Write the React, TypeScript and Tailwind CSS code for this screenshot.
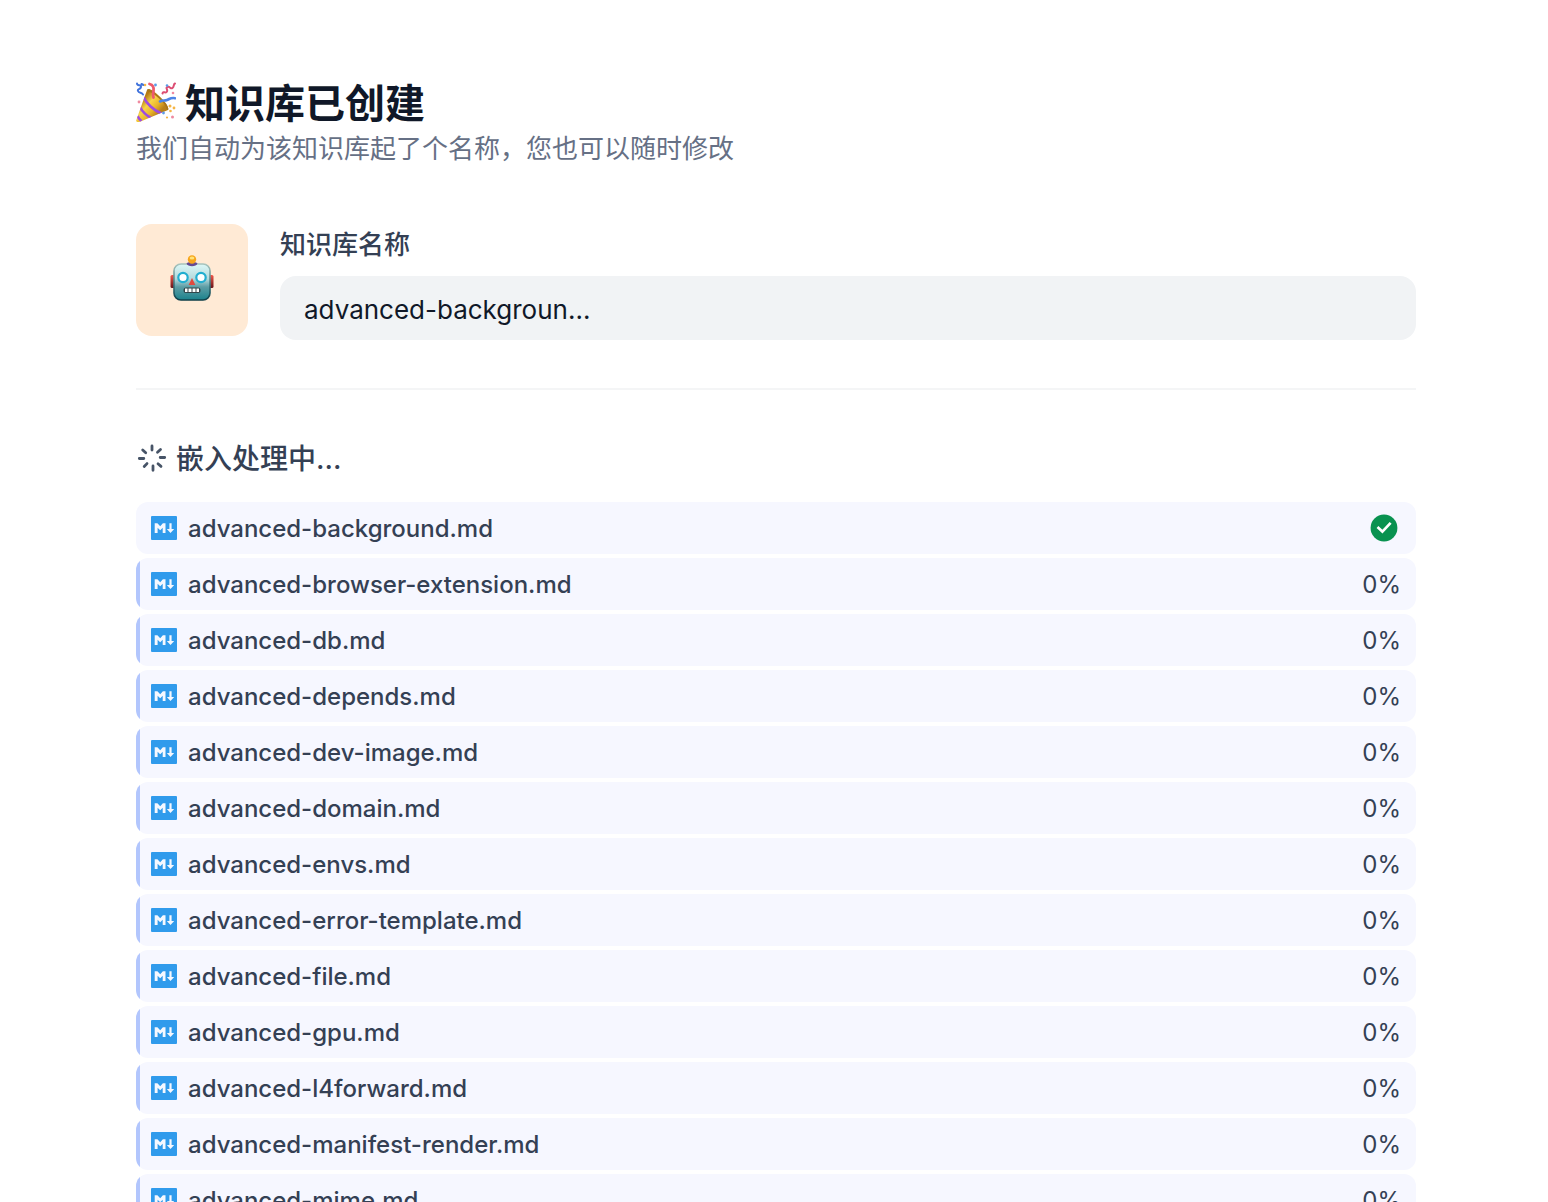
import { useState } from 'react';
import clsx from 'clsx';

type EmbeddingFile = {
  name: string;
  percent: number;
};

const files: EmbeddingFile[] = [
  { name: 'advanced-background.md', percent: 100 },
  { name: 'advanced-browser-extension.md', percent: 0 },
  { name: 'advanced-db.md', percent: 0 },
  { name: 'advanced-depends.md', percent: 0 },
  { name: 'advanced-dev-image.md', percent: 0 },
  { name: 'advanced-domain.md', percent: 0 },
  { name: 'advanced-envs.md', percent: 0 },
  { name: 'advanced-error-template.md', percent: 0 },
  { name: 'advanced-file.md', percent: 0 },
  { name: 'advanced-gpu.md', percent: 0 },
  { name: 'advanced-l4forward.md', percent: 0 },
  { name: 'advanced-manifest-render.md', percent: 0 },
  { name: 'advanced-mime.md', percent: 0 },
];

function PartyIcon() {
  return (
    <svg className="mt-0.5 size-10 shrink-0" viewBox="0 0 40 40" fill="none" aria-hidden="true">
      <defs>
        <linearGradient id="cone" x1="6" y1="18" x2="22" y2="32" gradientUnits="userSpaceOnUse">
          <stop stopColor="#b57a16" />
          <stop offset="0.35" stopColor="#f8d548" />
          <stop offset="0.7" stopColor="#e9b32a" />
          <stop offset="1" stopColor="#b98018" />
        </linearGradient>
        <clipPath id="cone-clip">
          <path d="M0.300 38 11 8c1-2.500 6 0 12 6s10.500 11.500 9 14L4 39.800c-2 .8-4.500.2-3.700-1.800Z" />
        </clipPath>
      </defs>
      <g clipPath="url(#cone-clip)">
        <path d="M0 0h40v40H0z" fill="url(#cone)" />
        <path d="M7.500 15c3 6.500 10 13.500 18 16.500M4 25c2 4 6 8.500 12 11.500M1.500 34c1 2 2 3.500 4 5" stroke="#9d4ce0" strokeWidth="2.600" />
      </g>
      <path d="M12 8.500c5 0 19 13 19.500 18.500" stroke="#a97619" strokeWidth="1.800" strokeLinecap="round" />
      <path d="M13.500 2c4 1 4.500 4 4 7s-1 4 0 6.500" stroke="#ee5a6c" strokeWidth="2.800" strokeLinecap="round" />
      <path d="M24 19.500c3-1.500 4.500-.5 7-1.500s4-2.500 8-1.800" stroke="#4c83e6" strokeWidth="2.600" strokeLinecap="round" />
      <path d="M1 1.500c0 3 4.500.5 4 3.500s-4 1.500-3 4 4 1 5 3.500M5.500 2l2 1" stroke="#3f72dc" strokeWidth="2" strokeLinecap="round" />
      <path d="M26.500 11.500c.5-3 3.500.5 4.500-2s-2-3.500.5-4.500 3 2.500 5 1 .5-3.500 2.500-4.500" stroke="#dc4f74" strokeWidth="2" strokeLinecap="round" />
      <g fill="#f5b544">
        <circle cx="9" cy="3" r="1.300" />
        <circle cx="34" cy="24" r="1.500" />
        <circle cx="34.500" cy="29" r="1.300" />
        <circle cx="38" cy="26" r="1.400" />
        <circle cx="31" cy="35.500" r="1.100" />
      </g>
      <g fill="#5c9be8">
        <circle cx="19.500" cy="3" r="1.400" />
        <circle cx="31" cy="3.500" r="1.300" />
        <circle cx="27.500" cy="31" r="1.400" />
      </g>
      <g fill="#ef8aa0">
        <circle cx="3" cy="20" r="1.400" />
        <circle cx="37" cy="11" r="1.300" />
        <circle cx="36.500" cy="35" r="1.500" />
      </g>
    </svg>
  );
}

function RobotIcon() {
  return (
    <svg className="h-[46px] w-11" viewBox="0 0 44 46" fill="none" aria-hidden="true">
      <defs>
        <linearGradient id="face" x1="0" y1="9" x2="0" y2="46" gradientUnits="userSpaceOnUse">
          <stop stopColor="#dcf8f7" />
          <stop offset="0.4" stopColor="#b4d9dc" />
          <stop offset="0.62" stopColor="#5c9da5" />
          <stop offset="1" stopColor="#16808a" />
        </linearGradient>
        <linearGradient id="rim" x1="0" y1="9" x2="0" y2="46" gradientUnits="userSpaceOnUse">
          <stop stopColor="#a9c4bd" />
          <stop offset="0.6" stopColor="#34727b" />
          <stop offset="1" stopColor="#0d3c46" />
        </linearGradient>
        <linearGradient id="ear" x1="0" y1="20" x2="0" y2="33" gradientUnits="userSpaceOnUse">
          <stop stopColor="#f0574a" />
          <stop offset="1" stopColor="#67151a" />
        </linearGradient>
      </defs>
      <rect x="0.500" y="20" width="5" height="13" rx="1.500" fill="url(#ear)" />
      <rect x="38.500" y="20" width="5" height="13" rx="1.500" fill="url(#ear)" />
      <rect x="4" y="9" width="36" height="36" rx="7" fill="url(#face)" stroke="url(#rim)" strokeWidth="1.600" />
      <path d="M16.500 8.500c2-2.500 9-2.500 11 0-1 3.500-10 3.500-11 0Z" fill="#664a91" />
      <circle cx="22" cy="4.500" r="4.200" fill="#f7a51b" />
      <ellipse cx="22" cy="3" rx="2.400" ry="1.500" fill="#ffe27a" />
      <circle cx="13" cy="22.500" r="4.700" fill="#fff" stroke="#22aed0" strokeWidth="2.200" />
      <circle cx="31" cy="22.500" r="4.700" fill="#fff" stroke="#22aed0" strokeWidth="2.200" />
      <path d="m22 23 3.400 7h-6.800L22 23Z" fill="#e0493f" />
      <rect x="13.500" y="32.500" width="17" height="5.500" rx="2.500" fill="#31464b" />
      <path d="M15 33.500h2.500v3.500H15zM18.500 33.500h3v3.500h-3zM22.500 33.500h3v3.500h-3zM26.500 33.500H29v3.500h-2.500z" fill="#fff" />
    </svg>
  );
}

function LoadingIcon() {
  return (
    <svg className="mt-1 size-8 shrink-0" viewBox="0 0 32 32" fill="none" stroke="#475467" strokeWidth="2.800" strokeLinecap="round" aria-hidden="true">
      <path d="M16 4v4M24.500 7.500l-3 2.800M28.700 15.500h-4.500M25 24.400l-3-2.600M17 28.300v-4.300M8.200 24.500l2.800-2.900M3.300 16.500h4.500M6.700 8l3 2.800" />
    </svg>
  );
}

function MarkdownIcon() {
  return (
    <svg className="h-6 w-[26px] shrink-0" viewBox="0 0 26 24" fill="none" aria-hidden="true">
      <rect width="26" height="24" rx="1" fill="#309bec" />
      <path d="M3.700 17V7.300h2.700l2.800 3 2.700-3h2.600V17h-2.800v-5.300l-2.500 2.500-2.600-2.500V17H3.700ZM18.400 7.300h2.200V13h2.600l-3.700 4-3.700-4h2.600V7.300Z" fill="#f5f8ff" />
    </svg>
  );
}

function DoneIcon() {
  return (
    <svg className="size-8 shrink-0" viewBox="0 0 32 32" fill="none" role="img" aria-label="已完成">
      <circle cx="16" cy="16" r="13.400" fill="#099250" />
      <path d="m10.500 16 3.900 3.600 7.300-7.700" stroke="#fff" strokeWidth="2.700" strokeLinecap="square" />
    </svg>
  );
}

function FileRow({ file }: { file: EmbeddingFile }) {
  const done = file.percent === 100;

  return (
    <li
      className={clsx(
        'flex h-[52px] shrink-0 items-center overflow-hidden rounded-xl bg-[#f6f7ff]',
        done ? 'pl-[15px] pr-4' : 'pr-[15px]',
      )}
    >
      {!done && <span className="mr-[11px] h-full w-1 shrink-0 bg-[#b2c6fd]" />}
      <MarkdownIcon />
      <span className="ml-[11px] grow truncate pt-0.5 text-2xl font-medium">{file.name}</span>
      {done ? <DoneIcon /> : <span className="pt-0.5 text-2xl">{file.percent}%</span>}
    </li>
  );
}

export default function App() {
  const [name, setName] = useState('advanced-backgroun...');

  return (
    <main className="h-screen overflow-hidden bg-white pt-20 pr-[132px] pl-[136px] font-['Inter','Noto_Sans_CJK_SC',sans-serif] text-[#344054]">
      {/* Title */}
      <h1 className="flex items-start gap-[9px] text-[40px] leading-[48px] font-semibold text-[#101828]">
        <PartyIcon />
        知识库已创建
      </h1>
      <p className="text-[26px] leading-[42px] text-[#667085]">我们自动为该知识库起了个名称，您也可以随时修改</p>

      {/* Name */}
      <div className="mt-[54px] flex gap-8 border-b-2 border-[#f4f5f6] pb-12">
        <button type="button" aria-label="图标" className="flex size-28 shrink-0 items-center justify-center rounded-2xl bg-[#ffead5] pb-1">
          <RobotIcon />
        </button>
        <div className="flex min-w-0 grow flex-col gap-2.5">
          <label htmlFor="dataset-name" className="text-[26px] leading-[42px] font-medium">
            知识库名称
          </label>
          <input
            id="dataset-name"
            value={name}
            onChange={(e) => setName(e.target.value)}
            className="h-16 w-full rounded-2xl bg-[#f1f3f5] px-6 pt-0.5 text-[26px] text-[#101828] outline-none"
          />
        </div>
      </div>

      {/* Progress */}
      <h2 className="mt-12 flex items-start gap-2 text-[28px] leading-[42px] font-medium">
        <LoadingIcon />
        嵌入处理中...
      </h2>
      <ul className="mt-[22px] flex flex-col gap-1">
        {files.map((file) => (
          <FileRow key={file.name} file={file} />
        ))}
      </ul>
    </main>
  );
}
